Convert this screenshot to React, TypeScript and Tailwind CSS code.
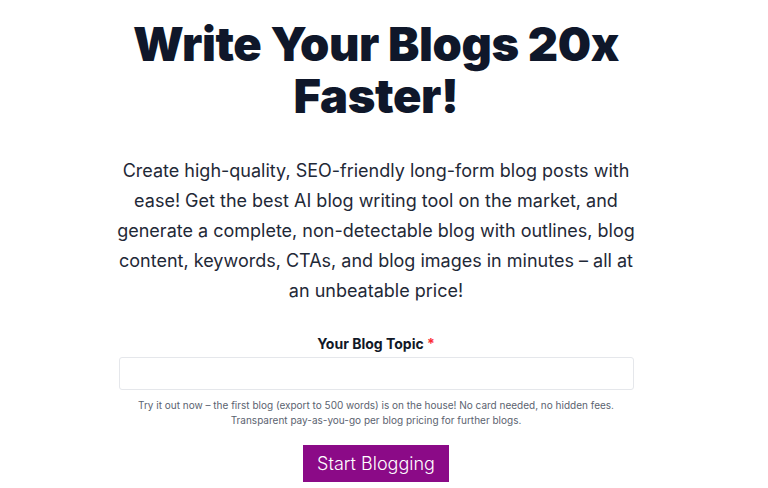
import { useState } from 'react'

export default function App() {
  const [topic, setTopic] = useState('')

  return (
    <div className="min-h-[488px] w-full bg-white pr-4 font-['Inter',sans-serif] text-[#111827]">
      <section className="mx-auto flex w-[520px] flex-col items-center pt-[18px] text-center">
        <h1 className="whitespace-nowrap text-[47px] font-black leading-[52px] tracking-[-0.4px] text-[#0f172a]">
          Write Your Blogs 20x
          <br />
          Faster!
        </h1>
        <p className="mt-[34px] text-[18px] leading-[30px] text-[#1f2937]">
          Create high-quality, SEO-friendly long-form blog posts with ease! Get the best AI blog writing tool on the
          market, and generate a complete, non-detectable blog with outlines, blog content, keywords, CTAs, and blog
          images in minutes – all at an unbeatable price!
        </p>
        <form className="mt-[28px] flex w-full flex-col items-center" onSubmit={(event) => event.preventDefault()}>
          <label className="text-[14px] font-bold leading-5 text-[#111827]">
            Your Blog Topic <span className="text-red-500">*</span>
          </label>
          <input
            className="mt-[3px] h-[33px] w-[515px] rounded-[3px] border border-[#e5e7eb] px-3 text-sm outline-none"
            value={topic}
            onChange={(event) => setTopic(event.target.value)}
          />
          <p className="mt-[8px] whitespace-nowrap text-[10px] leading-[15px] text-[#5b6370]">
            Try it out now – the first blog (export to 500 words) is on the house! No card needed, no hidden fees.
            <br />
            Transparent pay-as-you-go per blog pricing for further blogs.
          </p>
          <button
            className="mt-[17px] h-[37px] w-[146px] bg-[#8b0a87] text-[18px] font-light text-white"
            type="submit"
          >
            Start Blogging
          </button>
        </form>
      </section>
    </div>
  )
}
